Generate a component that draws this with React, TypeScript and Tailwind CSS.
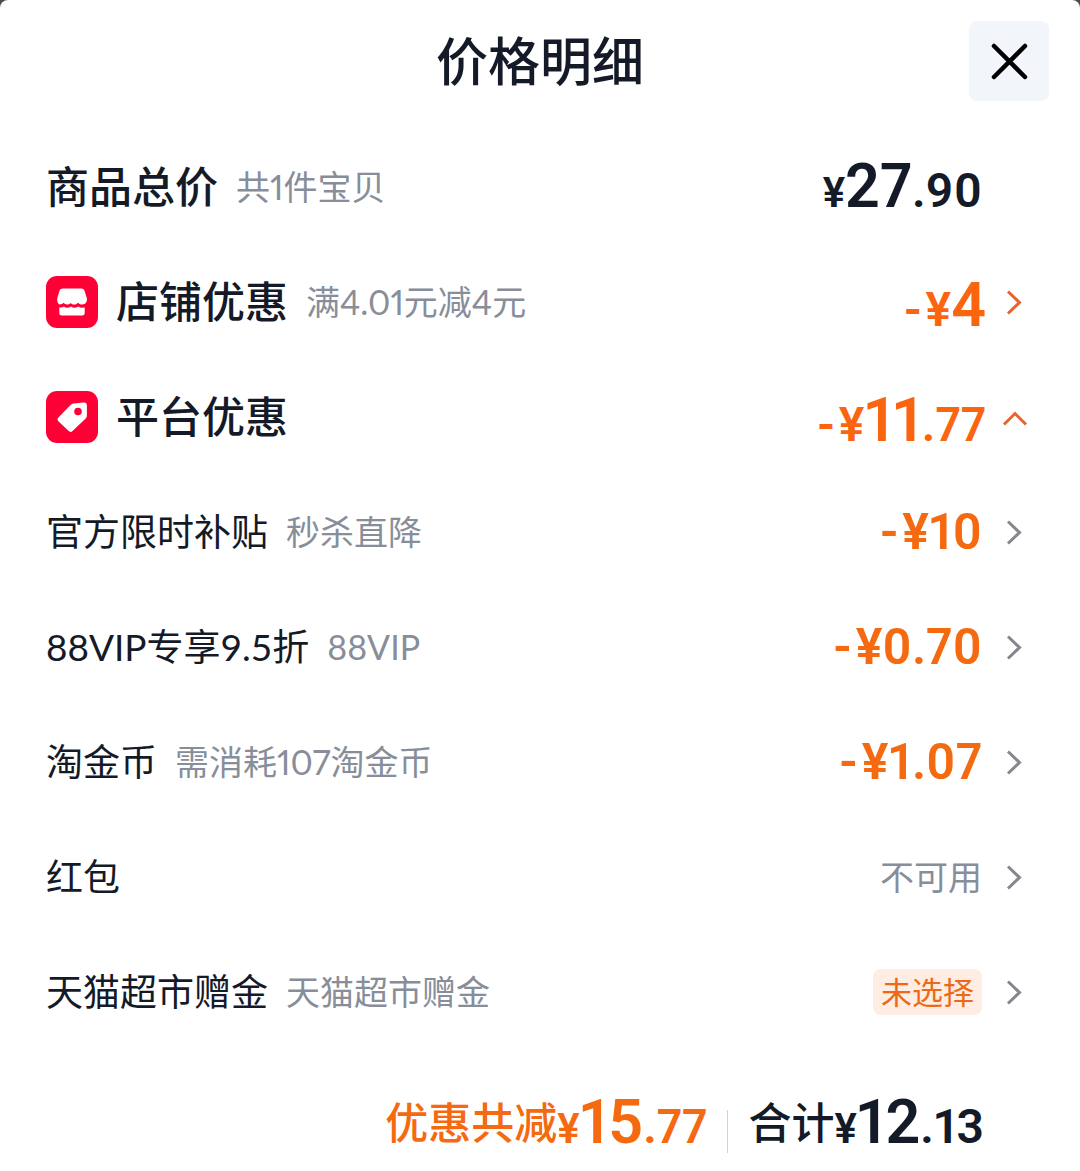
import clsx from 'clsx';
import type { ReactNode } from 'react';

interface DiscountRow {
  title: string;
  note?: string;
  value: ReactNode;
}

const ChevronRight = ({ className }: { className?: string }) => (
  <svg viewBox="0 0 36 36" className={clsx('size-9 shrink-0', className)} fill="none" stroke="currentColor" strokeWidth="3" aria-hidden="true">
    <path d="M12 7.500 23.500 18.500 12 29.500" />
  </svg>
);

const ChevronUp = ({ className }: { className?: string }) => (
  <svg viewBox="0 0 36 36" className={clsx('size-9 shrink-0', className)} fill="none" stroke="currentColor" strokeWidth="3" aria-hidden="true">
    <path d="M8 25.500 19 14.500 30 25.500" />
  </svg>
);

const ShopIcon = () => (
  <svg viewBox="0 0 52 52" className="size-[52px] shrink-0" aria-hidden="true">
    <rect width="52" height="52" rx="11" fill="#ff0036" />
    <path
      d="M17 12.500h18.500c1.300 0 2.300.7 2.900 1.900l2.400 7.600c.8 3.600-1.300 6.500-4.500 6.500-2 0-3.200-.6-4.300-1.800-1.300 1.300-2.300 1.800-3.800 1.800-1.300 0-2.600-.6-3.600-1.600-1 1-2.200 1.600-3.600 1.600-1.300 0-2.500-.6-3.400-1.700-1.100 1.200-2.400 1.700-4.300 1.700-1.500-1.200-2.500-3.200-2-6.500l2.300-7.600c.7-1.200 1.900-1.900 3.400-1.900z"
      fill="#fff"
    />
    <path
      d="M13.300 31.500c2.200.2 3.600-.3 4.500-1.100 2.200 1.700 4.900 1.700 7.200 0 2.200 1.700 4.900 1.700 7.200 0 1.600 1.100 3.700 1.500 6.500 1.100v5.500c0 1.600-.8 2.400-2.400 2.400H15.700c-1.600 0-2.400-.8-2.400-2.400z"
      fill="#fff"
    />
  </svg>
);

const TagIcon = () => (
  <svg viewBox="0 0 52 52" className="size-[52px] shrink-0" aria-hidden="true">
    <rect width="52" height="52" rx="11" fill="#ff0036" />
    <path
      d="M27.500 12.500 38 11.500c1.800-.1 2.800.8 2.900 2.500v10.500c0 1.200-.4 2-1.200 2.900L26.500 40c-1.200 1.200-2.600 1.200-3.800.1L12.400 30.300c-1.200-1.200-1.200-2.600 0-3.800L24.800 13.800c.8-.8 1.600-1.200 2.700-1.300z"
      fill="#fff"
    />
    <circle cx="32" cy="20.500" r="3.800" fill="#ff0036" />
  </svg>
);

const Price = ({ minus, whole, cents, smallYen }: { minus?: boolean; whole: string; cents?: string; smallYen?: boolean }) => (
  <span className="flex items-baseline font-['Roboto',sans-serif] text-[48px] leading-none font-semibold proportional-nums">
    {minus && <span className="mr-1">-</span>}
    <span className={clsx(smallYen && 'text-[42px]')}>¥</span>
    <span className="text-[61px] leading-none">{whole}</span>
    {cents && <span>.{cents}</span>}
  </span>
);

const SmallPrice = ({ amount }: { amount: string }) => (
  <span className="flex font-['Roboto',sans-serif] text-[50px] leading-none font-semibold text-[#f56a10] proportional-nums">
    <span className="mr-1">-</span>
    <span>¥{amount}</span>
  </span>
);

const Title = ({ children }: { children: ReactNode }) => (
  <span className="text-[43px] leading-none font-medium text-[#141a27]">{children}</span>
);

const Note = ({ children }: { children: ReactNode }) => (
  <span className="text-[34px] leading-none text-[#878e99] proportional-nums">{children}</span>
);

const discounts: DiscountRow[] = [
  { title: '官方限时补贴', note: '秒杀直降', value: <SmallPrice amount="10" /> },
  { title: '88VIP专享9.5折', note: '88VIP', value: <SmallPrice amount="0.70" /> },
  { title: '淘金币', note: '需消耗107淘金币', value: <SmallPrice amount="1.07" /> },
  { title: '红包', value: <Note>不可用</Note> },
  {
    title: '天猫超市赠金',
    note: '天猫超市赠金',
    value: (
      <span className="rounded-lg bg-[#ffece3] px-2 py-2 text-[31px] leading-[30px] text-[#ea6a17]">未选择</span>
    ),
  },
];

export default function App() {
  return (
    <div className="min-h-screen bg-[#4a4a4a]">
      <main className="min-h-screen rounded-t-[8px] bg-white font-['Lato','Noto_Sans_CJK_SC',sans-serif]" lang="zh-CN">
        <header className="grid grid-cols-[1fr_auto_1fr] items-center px-[31px] pt-[21px] pb-7">
          <h1 className="col-start-2 text-[52px] leading-none font-medium text-[#141a27]">价格明细</h1>
          <button type="button" aria-label="关闭" className="flex size-20 items-center justify-center justify-self-end rounded-lg bg-[#f2f5f9]">
            <svg viewBox="0 0 40 40" className="size-10" fill="none" stroke="#000" strokeWidth="4.500" strokeLinecap="round" aria-hidden="true">
              <path d="M5 5 36 36M36 5 5 36" />
            </svg>
          </button>
        </header>

        <ul className="pr-12 pl-[46px]">
          <li className="flex h-[115px] items-center justify-between pr-[50px]">
            <span className="flex items-center gap-[18px]">
              <Title>商品总价</Title>
              <Note>共1件宝贝</Note>
            </span>
            <span className="text-[#141a27]">
              <Price whole="27" cents="90" smallYen />
            </span>
          </li>

          <li>
            <button type="button" className="flex h-[115px] w-full items-center text-left">
              <ShopIcon />
              <span className="ml-[18px] flex flex-1 items-center gap-[18px]">
                <Title>店铺优惠</Title>
                <Note>满4.01元减4元</Note>
              </span>
              <span className="mt-2 mr-[10px] text-[#fb6510]">
                <Price minus whole="4" />
              </span>
              <ChevronRight className="text-[#e8642c]" />
            </button>
          </li>

          <li>
            <button type="button" aria-expanded="true" className="flex h-[115px] w-full items-center text-left">
              <TagIcon />
              <span className="ml-[18px] flex-1">
                <Title>平台优惠</Title>
              </span>
              <span className="mt-2 mr-[10px] text-[#fb6510]">
                <Price minus whole="11" cents="77" />
              </span>
              <ChevronUp className="text-[#e8642c]" />
            </button>
          </li>

          {discounts.map((row) => (
            <li key={row.title}>
              <button type="button" className="flex h-[115px] w-full items-center text-left">
                <span className="flex flex-1 items-center gap-[18px]">
                  <span className="text-[37px] leading-none text-[#141a27]">{row.title}</span>
                  {row.note && <Note>{row.note}</Note>}
                </span>
                <span className="mr-[14px] flex">{row.value}</span>
                <ChevronRight className="text-[#85868f]" />
              </button>
            </li>
          ))}
        </ul>

        {/* Totals */}
        <footer className="flex items-end justify-end pt-[43px] pr-24">
          <span className="flex items-center text-[#f56a10]">
            <span className="text-[43px] leading-none font-medium">优惠共减</span>
            <Price whole="15" cents="77" smallYen />
          </span>
          <span className="mx-5 h-[43px] w-px bg-[#cfd2d8]" />
          <span className="flex items-center text-[#141a27]">
            <span className="text-[43px] leading-none font-medium">合计</span>
            <Price whole="12" cents="13" smallYen />
          </span>
        </footer>
      </main>
    </div>
  );
}
